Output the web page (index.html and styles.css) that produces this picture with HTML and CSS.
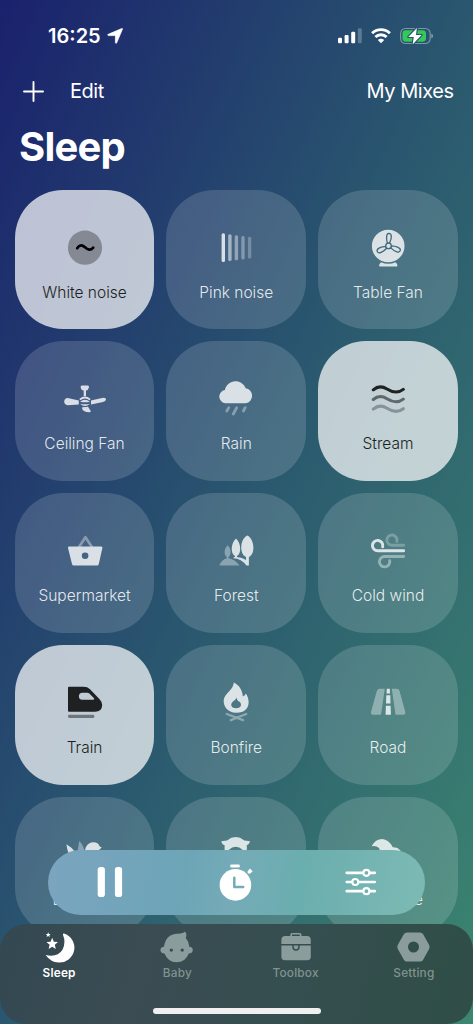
FILE: index.html
```html
<!DOCTYPE html>
<html lang="en">
<head>
    <meta charset="UTF-8">
    <title>Sleep</title>
    <link rel="stylesheet" href="styles.css">
</head>
<body>
<div class="screen">
    <div class="status">
        <span class="time">16:25</span>
        <svg class="location" width="16" height="16" viewBox="0 0 16 16"><path d="M15.4 1.3 9.7 14.8Q8.9 16 8.4 14.8V8.2Q8.4 7.6 7.8 7.6H1.2Q0 7.1 1.2 6.3L14.7.6Q15.8.3 15.4 1.3Z" fill="#fff" stroke="#fff" stroke-width=".7" stroke-linejoin="round"/></svg>
        <svg class="signal" width="24" height="16" viewBox="0 0 24 16" fill="#fff">
            <rect x="0" y="9.7" width="4" height="5.6" rx="1.2"/>
            <rect x="6.6" y="7" width="4" height="8.3" rx="1.2"/>
            <rect x="13.2" y="3.7" width="4" height="11.6" rx="1.2"/>
            <rect x="19.8" y=".3" width="4" height="15" rx="1.2" opacity=".25"/>
        </svg>
        <svg class="wifi" width="20" height="16" viewBox="0 0 20 16" fill="none" stroke="#fff" stroke-width="2.9">
            <path d="M1.1 5.3A12.7 12.7 0 0 1 18.9 5.3"/>
            <path d="M4.4 9A8 8 0 0 1 15.6 9"/>
            <path d="M10 15.2 6.8 12Q10 9.4 13.2 12Z" fill="#fff" stroke="none"/>
        </svg>
        <svg class="battery" width="33" height="18" viewBox="0 0 33 18">
            <rect x=".6" y="1.5" width="29.6" height="15" rx="5" fill="none" stroke="#fff" stroke-width="1.1" opacity=".4"/>
            <path d="M31.4 6.7Q33 7.2 33 9T31.4 11.3Z" fill="#fff" opacity=".45"/>
            <rect x="2.4" y="3.3" width="23.6" height="11.4" rx="3.4" fill="#34c759"/>
            <path d="M16.9 1 8.3 10H13.8L12.6 17.4 21.6 8H16Z" fill="#fff" stroke="#27526b" stroke-width="2.2" paint-order="stroke" stroke-linejoin="round"/>
        </svg>
    </div>

    <div class="nav">
        <svg width="21" height="21" viewBox="0 0 21 21"><path d="M10.5 1V20M1 10.5H20" stroke="#fff" stroke-width="1.9" stroke-linecap="round"/></svg>
        <span class="edit">Edit</span>
        <span class="mixes">My Mixes</span>
    </div>

    <h1>Sleep</h1>

    <div class="grid">
        <div class="tile active">
            <svg class="solid" viewBox="0 0 40 40"><circle cx="20" cy="19.7" r="17.1" opacity=".3"/><path class="line" d="M12.2 20.2C14.6 16.4 17.3 16.8 20 19.3S25.4 22.9 28.2 19.6" stroke-width="2.7"/></svg>
            <span>White noise</span>
        </div>
        <div class="tile">
            <svg viewBox="0 0 40 40">
                <rect x="5.6" y="5.3" width="3.4" height="28.8" rx="1.5"/>
                <rect x="12.2" y="6.3" width="3.4" height="26.6" rx="1.5" opacity=".66"/>
                <rect x="18.7" y="7.2" width="3.4" height="25" rx="1.5" opacity=".52"/>
                <rect x="25.3" y="8" width="3.4" height="23.4" rx="1.5" opacity=".42"/>
                <rect x="31.9" y="8.7" width="3.4" height="21.7" rx="1.5" opacity=".32"/>
            </svg>
            <span>Pink noise</span>
        </div>
        <div class="tile">
            <svg viewBox="0 0 40 40">
                <circle cx="20.2" cy="18" r="16.3"/>
                <path d="M13 34.3Q20.3 37.3 27.6 34.3L29 36Q30 38.4 29 38.4H12Q10.4 38.4 11.6 36Z"/>
                <g class="cut">
                    <path d="M19.4 15.1C18.2 11.5 18 5.4 20.7 5.3C23.9 5.4 24.2 9.2 21.6 15.1Z"/>
                    <path d="M19.4 15.1C18.2 11.5 18 5.4 20.7 5.3C23.9 5.4 24.2 9.2 21.6 15.1Z" transform="rotate(110 20.5 17.9)"/>
                    <path d="M19.4 15.1C18.2 11.5 18 5.4 20.7 5.3C23.9 5.4 24.2 9.2 21.6 15.1Z" transform="rotate(240 20.5 17.9)"/>
                    <circle cx="20.5" cy="17.9" r="2.8"/>
                </g>
            </svg>
            <span>Table Fan</span>
        </div>

        <div class="tile">
            <svg viewBox="0 0 40 40">
                <path d="M15.6 8.2Q15.4 6.6 17 6.6H22.6Q24.3 6.6 24 8.2Q23.3 11.3 21 11.6V17.2H18.7V11.6Q16.2 11.3 15.6 8.2Z"/>
                <path d="M2.7 18.9 13.8 21.4V25.4L2.7 26.2Q-.7 26-.8 22.6Q-.5 19 2.7 18.9Z"/>
                <path d="M26 21.5 37 18.9Q41.2 18 41 20.4Q40.8 22.1 38 23L26 25.6Z"/>
                <path d="M14.2 19.9Q20 15.2 25.7 19.9L24.5 21.2Q20 17.8 15.4 21.2Z"/>
                <path d="M15 22.7Q20 19 25 22.7Q20 24 15 22.7ZM15 24.7Q20 26 25 24.7Q20 29.4 15 24.7Z"/>
                <path d="M17.1 28.3 23 27.8 25.6 31.7V33.1Q18.3 33.5 17.2 30Z"/>
            </svg>
            <span>Ceiling Fan</span>
        </div>
        <div class="tile">
            <svg viewBox="0 0 40 40">
                <path d="M9.6 24.3A6.7 6.7 0 0 1 8.9 11C10 5.8 14.3 2.3 19.3 2.3C24 2.3 28 5 29.7 9.3A7.6 7.6 0 0 1 29.8 24.3Z"/>
                <path class="line dim" d="M12.8 28.6 10.8 32M20.6 28.8 17.3 35M29.2 28.6 27.4 32" stroke-width="2.8"/>
            </svg>
            <span>Rain</span>
        </div>
        <div class="tile active">
            <svg viewBox="0 0 40 40" class="line" stroke-width="3.1">
                <path d="M5.3 10.8C9.3 7.3 13.8 6.7 19 10S30.3 14.3 35.3 10.4"/>
                <path d="M5.3 20.5C9.3 17 13.8 16.4 19 19.7S30.3 24 35.3 20.1" opacity=".6"/>
                <path d="M5.3 30.1C9.3 26.6 13.8 26 19 29.3S30.3 33.6 35.3 29.7" opacity=".35"/>
            </svg>
            <span>Stream</span>
        </div>

        <div class="tile">
            <svg viewBox="0 0 40 40">
                <path class="line dim" d="M14.4 15.5 20.4 6.2 26.6 15.5" stroke-width="2.8"/>
                <path fill-rule="evenodd" d="M4 15.5H36.4Q37.8 15.6 37.4 17L33.8 33Q33.4 34.5 32 34.5H8.8Q7.3 34.5 7 33L3 17Q2.7 15.6 4 15.5ZM20.1 21.5A3.3 3.3 0 1 0 20.1 28.1A3.3 3.3 0 1 0 20.1 21.5Z"/>
            </svg>
            <span>Supermarket</span>
        </div>
        <div class="tile">
            <svg viewBox="0 0 40 40">
                <g class="dim"><path d="M11.6 14.2C15.6 17.5 15.3 24.3 12.5 26V27.3Q18 27.8 23.7 34.5H3.2Q6.2 28.3 10.8 27.3V26C7.9 24.3 7.7 17.5 11.6 14.2Z"/></g>
                <path d="M20 7.4C25.2 12 25.7 22.4 21 25V26.5H19V25C14.2 22.4 14.8 12 20 7.4Z"/>
                <path d="M31.3 4.4C38.4 7.5 39.8 23 32.9 26V34.5H30.4Q25.4 27.6 17.4 27.2L18 26Q25.2 25.8 30 29V26C22.8 23 24.2 7.5 31.3 4.4Z"/>
            </svg>
            <span>Forest</span>
        </div>
        <div class="tile">
            <svg viewBox="0 0 40 40" class="line" stroke-width="2.9">
                <path d="M28.9 10.3A5.1 5.1 0 1 0 24.2 14.2H35.7" opacity=".32"/>
                <path d="M14.7 15.8A5.2 5.2 0 1 0 9.9 19.8H35.7"/>
                <path d="M21.7 29.7A5.2 5.2 0 1 1 16.9 25.5H35.7" opacity=".5"/>
            </svg>
            <span>Cold wind</span>
        </div>

        <div class="tile active">
            <svg viewBox="0 0 40 40">
                <path fill-rule="evenodd" d="M4 3.8H18.5Q22.5 3.8 25 6.2L34.6 16.2Q37.2 19 37.2 22Q37 28.8 30 28.8H4Q3 28.8 3 27.8V4.8Q3 3.8 4 3.8ZM17.4 9.8A3.5 3.5 0 0 0 17.4 16.8H28.4Q29.6 16.5 29 15.3L24.6 10.7Q23.6 9.8 22.3 9.8Z"/>
                <rect x="3" y="31.8" width="26.4" height="3.2" rx="1.4" opacity=".5"/>
            </svg>
            <span>Train</span>
        </div>
        <div class="tile">
            <svg viewBox="0 0 40 40">
                <path fill-rule="evenodd" d="M17.8-.6C22.5 1.7 26.6 6.5 26.8 13.4Q29.3 12.8 29.9 10.5C34.8 18 34 29.8 20.2 29.8C10.8 29.6 7.4 23 7.7 17.4C8.2 9.8 17.3 7.6 17.8-.6ZM20.3 14.6C20 17.8 15.2 18.3 15.2 22.1C15.5 26.4 24.8 26.4 25 22C25 20 23.9 18.7 22.8 18.5Q21.1 17.6 20.3 14.6Z"/>
                <path class="line dim" d="M10.8 31 27 37.2M30.2 31 14.8 37.2" stroke-width="2.4"/>
            </svg>
            <span>Bonfire</span>
        </div>
        <div class="tile">
            <svg viewBox="0 0 40 40">
                <g class="dim"><path d="M11.7 5.8H16.8L13 31.8H5Q2.5 31.8 3 29L8.8 8Q9.6 5.8 11.7 5.8ZM23.8 5.8H28.7Q30.9 5.8 31.6 8L37.3 29Q37.7 31.8 35.3 31.8H27.5Z"/></g>
                <path d="M18.8 5.8H21.8L22 10.4H18.5ZM18.3 12.2H22.3L22.5 20.6H18ZM17.9 22.8H22.6L22.9 31.8H17.6Z"/>
            </svg>
            <span>Road</span>
        </div>

        <div class="tile">
            <svg viewBox="0 0 40 40">
                <path d="M1.4 9.3Q7 12.4 10 17C18 21 20 16 20.7 12.4Q23.6 7.3 28.4 7.3Q33.5 7.5 34.5 11.3L36.8 12.6 34 15Q31 31 20 32Q4 30 1.4 9.3Z"/>
                <g class="dim"><path d="M14.2 6 12.6 16H19.4Q18.5 9.8 14.2 6Z"/></g>
            </svg>
            <span>Birdsong</span>
        </div>
        <div class="tile">
            <svg viewBox="0 0 40 40">
                <path fill-rule="evenodd" d="M5.3 6.2 11 5.4Q19.7-1.4 28.4 5.4L34 6.2Q33 9.8 30.8 10V28Q20 38 8.6 28V10Q6 9.6 5.3 6.2ZM12.6 15Q19.8 8.6 26.8 15Z"/>
            </svg>
            <span>Owl</span>
        </div>
        <div class="tile">
            <svg viewBox="0 0 40 40">
                <path d="M3.6 11.2Q7.5 4 14.2 4Q20.6 4.3 25 12.4Q29.5 12 32.4 15.4V30H10Q15 20 11 13Q8 10.2 3.6 11.2Z"/>
            </svg>
            <span>Sea wave</span>
        </div>
    </div>

    <div class="player">
        <svg width="26" height="32" viewBox="0 0 26 32" fill="#fff"><rect x=".7" y="1" width="7.2" height="30" rx="2.8"/><rect x="17.9" y="1" width="7.2" height="30" rx="2.8"/></svg>
        <svg width="34" height="38" viewBox="0 0 34 38" fill="#fff">
            <circle cx="16.4" cy="21.9" r="15.8"/>
            <rect x="11.2" y="1.4" width="9.6" height="3.2" rx="1.4"/>
            <path d="M28.6 8.3 31 5.4 33.7 8.3 31.3 10.4H28.7Z"/>
            <path d="M15.3 14.8V23.9H24.2" fill="none" stroke="#72adb5" stroke-width="2.5" stroke-linecap="round" stroke-linejoin="round"/>
        </svg>
        <svg class="sliders" width="32" height="28" viewBox="0 0 32 28" stroke="#fff" stroke-width="2.7" stroke-linecap="round">
            <path d="M1.8 4.8H29.8M1.8 14H29.8M1.8 23.2H29.8"/>
            <g fill="#70b0b0" stroke-width="2.2"><circle cx="21.4" cy="4.8" r="3"/><circle cx="10.3" cy="14" r="3"/><circle cx="21.4" cy="23.2" r="3"/></g>
        </svg>
    </div>

    <div class="tabs">
        <div class="tab current">
            <svg viewBox="0 0 34 32">
                <path d="M21.9 2.4A14.9 14.9 0 0 1 16.5 31.5Q8.8 31.4 3.6 24.1Q15.5 26.8 20.5 18.8Q24.2 11.5 20.9 3.4Q20.9 2.3 21.9 2.4Z"/>
                <path d="M10.2 6.8 11.8 10.7 16 11 12.8 13.8 13.8 17.9 10.2 15.7 6.6 17.9 7.6 13.8 4.4 11 8.6 10.7Z"/>
                <path d="M6.2 1.3 6.9 3 8.6 3.1 7.3 4.3 7.8 6 6.2 5 4.6 6 5.1 4.3 3.8 3.1 5.5 3Z"/>
            </svg>
            <span>Sleep</span>
        </div>
        <div class="tab">
            <svg viewBox="0 0 34 32"><path fill-rule="evenodd" d="M16.5 2.7Q22.8 3.1 25 .6Q27.4 3.7 25.7 6.8Q28.6 10.2 29.3 15.7Q32.7 16 32.8 19Q32.7 22.3 28.8 22.5Q25.3 31.3 16.6 31.3T4.5 22.5Q.6 22.3.4 19Q.6 16 4 15.7Q5.6 3.6 16.5 2.7ZM11.3 17.4A1.7 1.7 0 1 0 11.3 20.8A1.7 1.7 0 1 0 11.3 17.4ZM22.2 17.4A1.7 1.7 0 1 0 22.2 20.8A1.7 1.7 0 1 0 22.2 17.4Z"/></svg>
            <span>Baby</span>
        </div>
        <div class="tab">
            <svg viewBox="0 0 34 32">
                <path fill-rule="evenodd" d="M11.3 5V3.6Q11.4 2 13 2H20.8Q22.4 2 22.5 3.6V5H28Q31.8 5.1 31.8 9V13H2.4V9Q2.4 5.1 6.2 5ZM13 5H20.8V3.6H13Z"/>
                <path d="M2.4 14.5H13.3V16A3.7 3.7 0 0 0 20.7 16V14.5H31.8V26Q31.6 29.2 28 29.3H6.2Q2.6 29.2 2.4 26Z"/>
                <path d="M14.8 14.5H19.2V16A2.2 2.2 0 0 1 14.8 16Z"/>
            </svg>
            <span>Toolbox</span>
        </div>
        <div class="tab">
            <svg viewBox="0 0 34 32"><path fill-rule="evenodd" d="M10 1.4H23Q25 1.4 26 3L32.2 14Q33 15.9 32.2 17.8L26 28.9Q25 30.5 23 30.5H10Q8 30.5 7 28.9L.7 17.8Q-.1 15.9.7 14L7 3Q8 1.4 10 1.4ZM16.5 10.5A5.5 5.5 0 1 0 16.5 21.5A5.5 5.5 0 1 0 16.5 10.5Z"/></svg>
            <span>Setting</span>
        </div>
    </div>
    <div class="home"></div>
</div>
</body>
</html>
```
FILE: styles.css
```css
* { box-sizing: border-box; }
body { margin: 0; font-family: Inter, "Liberation Sans", sans-serif; color: #fff; }
svg { overflow: visible; flex: none; }

.screen {
    position: relative;
    width: 473px;
    height: 1024px;
    overflow: hidden;
    background: linear-gradient(to bottom right, #1a216d, #2a576f 50%, #3c8670);
}

.status {
    display: flex;
    align-items: center;
    height: 71px;
    padding: 0 40px 0 48px;
}
.time { font-size: 20px; font-weight: 600; width: 58.5px; }
.signal { margin-left: auto; margin-right: 9px; }
.wifi { margin-right: 9px; }

.nav {
    display: flex;
    align-items: center;
    height: 40px;
    padding: 0 20px 0 22.5px;
    font-size: 20px;
    letter-spacing: -0.45px;
}
.edit { margin-left: 26.5px; }
.mixes { margin-left: auto; margin-right: -0.5px; }

h1 {
    margin: 12px 0 0 19px;
    height: 66.7px;
    font-size: 40px;
    line-height: 48px;
    font-weight: 700;
    letter-spacing: -0.8px;
}

.grid {
    display: grid;
    grid-template-columns: repeat(3, 139.7px);
    grid-auto-rows: 139.7px;
    gap: 12.05px;
    padding-left: 14.7px;
}
.tile {
    display: flex;
    flex-direction: column;
    align-items: center;
    padding-top: 38px;
    border-radius: 48px;
    background: rgba(255, 255, 255, 0.15);
    color: rgba(255, 255, 255, 0.87);
    font-size: 15.5px;
    font-weight: 300;
    line-height: 20px;
}
.tile svg {
    width: 40px;
    height: 40px;
    margin-bottom: 15px;
    fill: #fff;
    opacity: 0.8;
}
.tile.active { background: rgba(255, 255, 255, 0.71); color: #1c1f20; }
.tile.active svg { fill: #000; opacity: 0.84; }
.tile.active .solid { opacity: 1; }
.tile .line {
    fill: none;
    stroke: #fff;
    stroke-linecap: round;
    stroke-linejoin: round;
}
.tile.active .line { fill: none; stroke: #000; }
.dim { opacity: 0.45; }
.cut { stroke: #3d6878; stroke-width: 1.3; }

.player {
    position: absolute;
    left: 48.2px;
    top: 849.5px;
    width: 376.5px;
    height: 65px;
    border-radius: 33px;
    display: grid;
    grid-template-columns: repeat(3, 1fr);
    place-items: center;
    background: linear-gradient(100deg, #7ba4c0, #6da5b7 36%, #75abb7 49%, #6baeaf 66%, #7dbab4);
}
.player svg { margin-right: 1px; }

.tabs {
    position: absolute;
    left: 0;
    bottom: 0;
    width: 100%;
    height: 100px;
    padding-top: 7px;
    border-radius: 26px;
    display: grid;
    grid-template-columns: repeat(4, 1fr);
    background: linear-gradient(105deg, #334852, #3b4c52 30%, #354e50 60%, #2f4e46);
}
.tab {
    display: flex;
    flex-direction: column;
    align-items: center;
    font-size: 11.8px;
    font-weight: 500;
    letter-spacing: 0.2px;
    line-height: 15px;
    color: #81928f;
}
.tab svg { width: 34px; height: 32px; margin-bottom: 3px; fill: #8a9c9b; }
.tab.current { color: #fff; font-weight: 600; }
.tab.current svg { fill: #fff; }

.home {
    position: absolute;
    left: 152.5px;
    bottom: 10px;
    width: 168.5px;
    height: 6px;
    border-radius: 3px;
    background: #f0f0f0;
}
```
